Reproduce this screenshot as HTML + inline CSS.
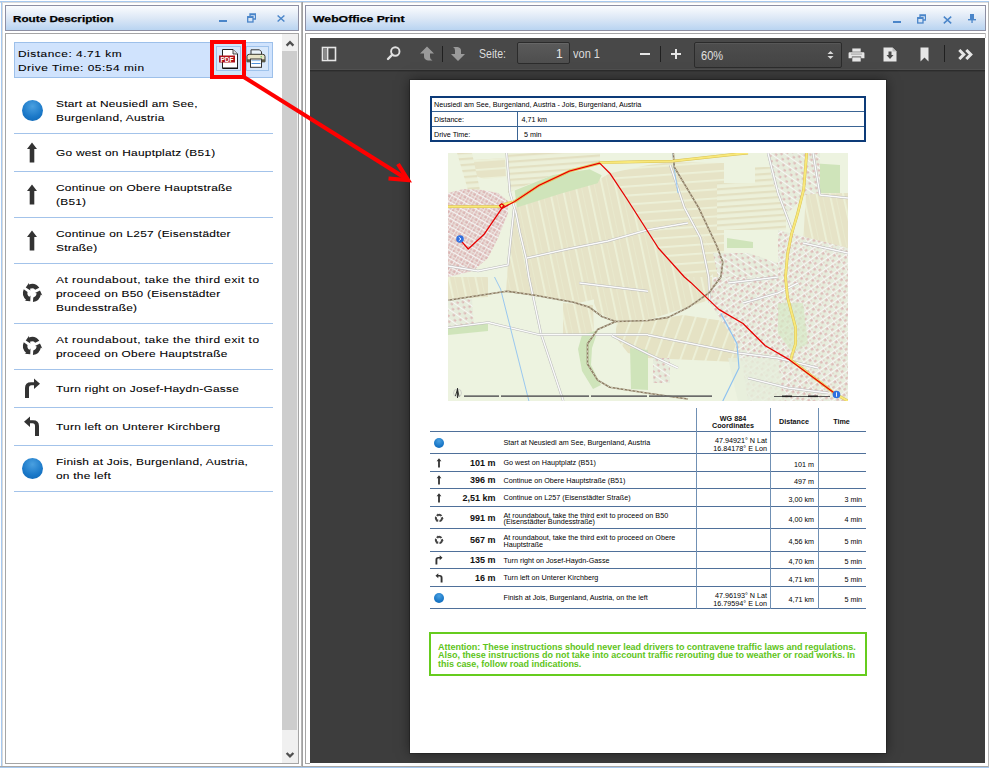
<!DOCTYPE html>
<html><head><meta charset="utf-8">
<style>
*{box-sizing:border-box;margin:0;padding:0}
html,body{width:989px;height:768px;overflow:hidden;background:#fff;font-family:"Liberation Sans",sans-serif}
.a{position:absolute}
.hdr{position:absolute;top:5px;height:26px;border:1px solid #8d8fa3;background:linear-gradient(#fbfcfe,#dde8f6 50%,#b9d4f1)}
.ttl{position:absolute;font-size:9px;line-height:12px;font-weight:bold;color:#000;white-space:nowrap;transform-origin:0 0;transform:scaleX(1.3);-webkit-text-stroke:0.25px #000}
.lst{position:absolute;left:14px;width:259px;border-bottom:1px solid #99bbe8}
.txt{position:absolute;left:56px;font-size:9.6px;line-height:14px;color:#000;letter-spacing:0.2px;white-space:nowrap;transform-origin:0 0;transform:scaleX(1.24);-webkit-text-stroke:0.08px #000}
.ic{position:absolute}
.p7{position:absolute;font-size:7.2px;line-height:8px;color:#000;white-space:nowrap}
.p7b{position:absolute;font-size:7.2px;line-height:8px;color:#111;white-space:nowrap;font-weight:bold}
.dist{position:absolute;font-size:9px;line-height:10px;font-weight:bold;color:#111;white-space:nowrap}
</style></head>
<body>
<!-- outer frame lines -->
<div class="a" style="left:0;top:1px;width:989px;height:1px;background:#a7c9ef"></div>
<div class="a" style="left:0;top:2px;width:989px;height:1px;background:#d9d9d9"></div>
<div class="a" style="left:1px;top:1px;width:1px;height:767px;background:#a7c9ef"></div>
<div class="a" style="left:2px;top:2px;width:1px;height:764px;background:#d9d9d9"></div>
<div class="a" style="left:0;top:766px;width:989px;height:1px;background:#a9a9a9"></div>
<div class="a" style="left:0;top:767px;width:989px;height:1px;background:#a7c9ef"></div>
<div class="a" style="left:988px;top:2px;width:1px;height:765px;background:#b5b5b5"></div>
<div class="a" style="left:301px;top:2px;width:1px;height:765px;background:#b5b5b5"></div>
<div class="a" style="left:302px;top:2px;width:1px;height:765px;background:#a0a0a0"></div>

<!-- LEFT PANEL -->
<div class="hdr" style="left:5px;width:294px"></div>
<div class="ttl" style="left:12.5px;top:13px">Route Description</div>
<div class="a" style="left:5px;top:33px;width:294px;height:731px;border:1px solid #a5a5a5;background:#fff"></div>


<!-- info box -->
<div class="a" style="left:14px;top:42px;width:259px;height:36px;background:#d0e3fd;border:1px solid #9dc0ea"></div>
<div class="txt" style="left:18px;top:47px;letter-spacing:0.42px">Distance: 4.71 km<br>Drive Time: 05:54 min</div>
<!-- pdf/print buttons -->
<div class="a" style="left:214px;top:44px;width:28px;height:31px;background:#cfe8fb"></div>
<div class="a" style="left:216px;top:46px;width:25px;height:25px;border:1px solid #9fc3ec;background:#d8e8fb"></div>
<div class="a" style="left:246px;top:46px;width:23px;height:25px;border:1px solid #9fc3ec;background:#d8e8fb"></div>
<svg class="a" style="left:217px;top:47px" width="23" height="23" viewBox="0 0 23 23">
 <path d="M5.5 2.5 H16 L20.5 7 V21.5 H5.5 Z" fill="#fff" stroke="#222" stroke-width="1"/>
 <path d="M16 2.5 V7 H20.5" fill="#ddd" stroke="#222" stroke-width="0.8"/>
 <rect x="6" y="20.5" width="15" height="1.5" fill="#111"/>
 <rect x="2" y="8.5" width="16" height="7" fill="#b01018"/>
 <text x="10" y="14.6" font-size="6.5" font-weight="bold" fill="#fff" text-anchor="middle" font-family="Liberation Sans">PDF</text>
</svg>
<svg class="a" style="left:246px;top:49px" width="23" height="19" viewBox="0 0 23 19">
 <path d="M5 0.8 H13.5 L15.5 2.8 V7 H5 Z" fill="#eaf3fb" stroke="#333" stroke-width="1"/>
 <path d="M1 7.5 Q1 5.3 3.3 5.3 H16.7 Q19 5.3 19 7.5 V12.8 H1 Z" fill="#e8e4c8" stroke="#3a3a30" stroke-width="1"/>
 <rect x="1" y="10.3" width="18" height="2.5" fill="#5a5844"/>
 <rect x="4.5" y="10" width="11" height="8.3" fill="#fff" stroke="#333" stroke-width="1"/>
 <rect x="5.5" y="11.2" width="9" height="0.9" fill="#8ab8e8"/>
 <rect x="5.5" y="14" width="9" height="1" fill="#4c8fd8"/>
 <circle cx="15.2" cy="7.8" r="0.7" fill="#5c5"/>
</svg>
<!-- red box -->
<div class="a" style="left:210px;top:40px;width:36px;height:39px;border:4px solid #fe0000"></div>
<div class="a" style="left:14px;top:133px;width:259px;height:1px;background:#a3c3ea"></div>
<div class="txt" style="top:97px">Start at Neusiedl am See,<br>Burgenland, Austria</div>
<div class="a" style="left:14px;top:171px;width:259px;height:1px;background:#a3c3ea"></div>
<div class="txt" style="top:146.4px">Go west on Hauptplatz (B51)</div>
<div class="a" style="left:14px;top:217px;width:259px;height:1px;background:#a3c3ea"></div>
<div class="txt" style="top:181px">Continue on Obere Hauptstra&szlig;e<br>(B51)</div>
<div class="a" style="left:14px;top:263px;width:259px;height:1px;background:#a3c3ea"></div>
<div class="txt" style="top:227px">Continue on L257 (Eisenst&auml;dter<br>Stra&szlig;e)</div>
<div class="a" style="left:14px;top:323px;width:259px;height:1px;background:#a3c3ea"></div>
<div class="txt" style="top:273px"><span style="letter-spacing:0.4px">At roundabout, take the third exit to</span><br>proceed on B50 (Eisenst&auml;dter<br>Bundesstra&szlig;e)</div>
<div class="a" style="left:14px;top:369px;width:259px;height:1px;background:#a3c3ea"></div>
<div class="txt" style="top:333px"><span style="letter-spacing:0.4px">At roundabout, take the third exit to</span><br>proceed on Obere Hauptstra&szlig;e</div>
<div class="a" style="left:14px;top:407px;width:259px;height:1px;background:#a3c3ea"></div>
<div class="txt" style="top:382.3px">Turn right on Josef-Haydn-Gasse</div>
<div class="a" style="left:14px;top:445px;width:259px;height:1px;background:#a3c3ea"></div>
<div class="txt" style="top:420.3px">Turn left on Unterer Kirchberg</div>
<div class="a" style="left:14px;top:491px;width:259px;height:1px;background:#a3c3ea"></div>
<div class="txt" style="top:455px">Finish at Jois, Burgenland, Austria,<br>on the left</div>
<div class="a" style="left:22px;top:100.0px;width:21px;height:21px;border-radius:50%;background:radial-gradient(circle at 50% 30%,#4aa0e0,#1a78c8 60%,#0e64b0)"></div>
<div class="a" style="left:22px;top:457.5px;width:21px;height:21px;border-radius:50%;background:radial-gradient(circle at 50% 30%,#4aa0e0,#1a78c8 60%,#0e64b0)"></div>
<svg class="a" style="left:26px;top:141.5px" width="12" height="21" viewBox="0 0 12 21"><path d="M6 0.5 L11 7 H8.3 V20.5 H3.7 V7 H1 Z" fill="#333"/></svg>
<svg class="a" style="left:26px;top:183.5px" width="12" height="21" viewBox="0 0 12 21"><path d="M6 0.5 L11 7 H8.3 V20.5 H3.7 V7 H1 Z" fill="#333"/></svg>
<svg class="a" style="left:26px;top:229.5px" width="12" height="21" viewBox="0 0 12 21"><path d="M6 0.5 L11 7 H8.3 V20.5 H3.7 V7 H1 Z" fill="#333"/></svg>
<svg class="a" style="left:20.7px;top:282px" width="22" height="22" viewBox="0 0 22 22"><path d="M18.28 5.71 A9.0 9.0 0 0 0 7.92 2.54 L8.08 0.81 L4.76 5.38 L9.50 8.40 L8.98 6.87 A4.6 4.6 0 0 1 14.20 7.69 Z M11.94 19.95 A9.0 9.0 0 0 0 19.86 12.56 L21.29 13.56 L18.99 8.40 L14.00 11.00 L15.59 11.32 A4.6 4.6 0 0 1 12.27 15.42 Z M2.78 7.34 A9.0 9.0 0 0 0 5.21 17.89 L3.64 18.63 L9.25 19.22 L9.50 13.60 L8.43 14.81 A4.6 4.6 0 0 1 6.54 9.89 Z" fill="#333"/></svg>
<svg class="a" style="left:20.7px;top:335px" width="22" height="22" viewBox="0 0 22 22"><path d="M18.28 5.71 A9.0 9.0 0 0 0 7.92 2.54 L8.08 0.81 L4.76 5.38 L9.50 8.40 L8.98 6.87 A4.6 4.6 0 0 1 14.20 7.69 Z M11.94 19.95 A9.0 9.0 0 0 0 19.86 12.56 L21.29 13.56 L18.99 8.40 L14.00 11.00 L15.59 11.32 A4.6 4.6 0 0 1 12.27 15.42 Z M2.78 7.34 A9.0 9.0 0 0 0 5.21 17.89 L3.64 18.63 L9.25 19.22 L9.50 13.60 L8.43 14.81 A4.6 4.6 0 0 1 6.54 9.89 Z" fill="#333"/></svg>
<svg class="a" style="left:24px;top:378px" width="17" height="21" viewBox="0 0 17 21"><path d="M1 20 V10 Q1 4.2 7 4.2 H10 V0.5 L16 5.7 L10 10.9 V7.2 H7.5 Q5 7.2 5 10 V20 Z" fill="#333"/></svg>
<svg class="a" style="left:23px;top:416px" width="17" height="21" viewBox="0 0 17 21"><g transform="translate(17 0) scale(-1 1)"><path d="M1 20 V10 Q1 4.2 7 4.2 H10 V0.5 L16 5.7 L10 10.9 V7.2 H7.5 Q5 7.2 5 10 V20 Z" fill="#333"/></g></svg>
<div class="a" style="left:282px;top:34px;width:16px;height:729px;background:#f0f0f0"></div>
<div class="a" style="left:282px;top:51px;width:15px;height:679px;background:#cdcdcd"></div>
<svg class="a" style="left:284px;top:38px" width="12" height="10" viewBox="0 0 12 10"><path d="M2.6 7.6 L6 4.2 L9.4 7.6" fill="none" stroke="#505050" stroke-width="2.3"/></svg>
<svg class="a" style="left:284px;top:750px" width="12" height="10" viewBox="0 0 12 10"><path d="M2.6 3 L6 6.4 L9.4 3" fill="none" stroke="#505050" stroke-width="2.3"/></svg>
<div class="a" style="left:219px;top:20px;width:8px;height:2px;background:#4a85c9"></div>
<svg class="a" style="left:247px;top:13px" width="9" height="10" viewBox="0 0 9 10"><path d="M3 3.5 V1 H8.5 V6 H6" fill="none" stroke="#4a85c9" stroke-width="1.3"/><rect x="0.7" y="3.7" width="5.3" height="5.3" fill="none" stroke="#4a85c9" stroke-width="1.3"/><rect x="3" y="1" width="5.5" height="1.3" fill="#4a85c9"/><rect x="0.7" y="3.7" width="5.3" height="1.3" fill="#4a85c9"/></svg>
<svg class="a" style="left:277px;top:15px" width="8" height="7" viewBox="0 0 8 7"><path d="M0.6 0.5 L7.4 6.5 M7.4 0.5 L0.6 6.5" stroke="#4a85c9" stroke-width="1.4"/></svg>

<!-- RIGHT PANEL -->
<div class="hdr" style="left:305px;width:681px"></div>
<div class="ttl" style="left:312.5px;top:13px;transform:scaleX(1.36)">WebOffice Print</div>
<div class="a" style="left:305px;top:33px;width:681px;height:731px;border-left:1px solid #a5a5a5;border-top:1px solid #a5a5a5;background:#fff"></div><div class="a" style="left:305px;top:763px;width:5px;height:1px;background:#a5a5a5"></div><div class="a" style="left:985px;top:33px;width:1px;height:5px;background:#c5c5c5"></div>
<div class="a" style="left:893px;top:21px;width:8px;height:2px;background:#4a85c9"></div>
<svg class="a" style="left:917px;top:14px" width="9" height="10" viewBox="0 0 9 10"><path d="M3 3.5 V1 H8.5 V6 H6" fill="none" stroke="#4a85c9" stroke-width="1.3"/><rect x="0.7" y="3.7" width="5.3" height="5.3" fill="none" stroke="#4a85c9" stroke-width="1.3"/><rect x="3" y="1" width="5.5" height="1.3" fill="#4a85c9"/><rect x="0.7" y="3.7" width="5.3" height="1.3" fill="#4a85c9"/></svg>
<svg class="a" style="left:943px;top:15.5px" width="9" height="8" viewBox="0 0 9 8"><path d="M0.8 0.6 L8.2 7.4 M8.2 0.6 L0.8 7.4" stroke="#4a85c9" stroke-width="1.5"/></svg>
<svg class="a" style="left:968px;top:14px" width="8" height="9" viewBox="0 0 8 9"><rect x="2" y="0" width="4" height="5.5" fill="#4a85c9"/><rect x="0" y="5" width="8" height="1.4" fill="#4a85c9"/><rect x="3.4" y="5" width="1.3" height="4" fill="#4a85c9"/></svg>

<!-- PDF viewer -->
<div class="a" style="left:310px;top:38px;width:675px;height:725px;background:#3d3d3d"></div>
<div class="a" style="left:310px;top:38px;width:675px;height:31px;background:#484848"></div><div class="a" style="left:310px;top:69px;width:675px;height:1px;background:#505050"></div><div class="a" style="left:310px;top:70px;width:675px;height:1px;background:#2c2c2c"></div><div class="a" style="left:310px;top:71px;width:675px;height:1px;background:#363636"></div>
<!-- page -->
<div class="a" style="left:410px;top:80px;width:476px;height:673px;background:#fff;box-shadow:0 0 0 1px rgba(0,0,0,.2),0 0 12px rgba(0,0,0,.5)"></div>

<!-- toolbar icons -->
<svg class="a" style="left:321px;top:46px" width="16" height="16" viewBox="0 0 16 16"><rect x="1.5" y="1.5" width="13" height="13" fill="none" stroke="#e6e6e6" stroke-width="1.6"/><rect x="2.3" y="2.3" width="3.8" height="11.4" fill="#8a8a8a"/><rect x="6" y="2" width="1.4" height="12" fill="#e6e6e6"/></svg>
<svg class="a" style="left:386px;top:45px" width="15" height="16" viewBox="0 0 15 16"><circle cx="9.3" cy="6.5" r="4.2" fill="none" stroke="#e0e0e0" stroke-width="1.9"/><path d="M6.3 9.6 L2 14" stroke="#e0e0e0" stroke-width="2.4" stroke-linecap="round"/></svg>
<svg class="a" style="left:419px;top:46px" width="16" height="16" viewBox="0 0 16 16"><path d="M8 0.6 L15 7.5 H11 V11 Q11 13.5 13.5 14.5 H9 Q5 13.5 5 10.5 V7.5 H1 Z" fill="#9a9a9a"/></svg>
<div class="a" style="left:442px;top:46px;width:1px;height:16px;background:#202020"></div>
<svg class="a" style="left:450px;top:46px" width="16" height="16" viewBox="0 0 16 16"><path d="M8 15 L15 8 H11 V4.5 Q11 1.5 7.5 1 H3 Q5 1.8 5 4.5 V8 H1 Z" fill="#9a9a9a"/></svg>
<div class="a" style="left:479px;top:46.6px;font-size:12px;line-height:14px;color:#dcdcdc;transform-origin:0 0;transform:scaleX(0.88)">Seite:</div>
<div class="a" style="left:517px;top:42px;width:53px;height:22px;border:1px solid #2b2b2b;border-radius:2px;background:linear-gradient(#5a5a5a,#4e4e4e);box-shadow:inset 0 1px 0 rgba(255,255,255,.08)"></div>
<div class="a" style="left:556px;top:46.6px;font-size:12px;line-height:14px;color:#e8e8e8">1</div>
<div class="a" style="left:573px;top:46.6px;font-size:12px;line-height:14px;color:#dcdcdc;transform-origin:0 0;transform:scaleX(0.92)">von 1</div>
<div class="a" style="left:640px;top:52.5px;width:10px;height:2.5px;background:#e6e6e6"></div>
<div class="a" style="left:660px;top:46px;width:1px;height:16px;background:#202020"></div>
<div class="a" style="left:671px;top:52.8px;width:10px;height:2.5px;background:#e6e6e6"></div>
<div class="a" style="left:674.8px;top:49px;width:2.5px;height:10px;background:#e6e6e6"></div>
<div class="a" style="left:694px;top:42px;width:148px;height:26px;border:1px solid #2b2b2b;border-radius:2px;background:linear-gradient(#4d4d4d,#444);box-shadow:inset 0 1px 0 rgba(255,255,255,.06)"></div>
<div class="a" style="left:701px;top:48.8px;font-size:12px;line-height:14px;color:#e0e0e0;transform-origin:0 0;transform:scaleX(0.92)">60%</div>
<svg class="a" style="left:826px;top:50px" width="9" height="10" viewBox="0 0 9 10"><path d="M1.5 4 L4.5 1 L7.5 4 Z M1.5 6 L4.5 9 L7.5 6 Z" fill="#d8d8d8"/></svg>
<svg class="a" style="left:848px;top:48px" width="17" height="14" viewBox="0 0 18 15"><path d="M4.5 0.5 H13.5 V4 H4.5 Z" fill="#e6e6e6"/><path d="M1.5 4.5 H16.5 Q17.5 4.5 17.5 6 V11 H14 V9 H4 V11 H0.5 V6 Q0.5 4.5 1.5 4.5 Z" fill="#e6e6e6"/><rect x="4.5" y="10" width="9" height="4.5" fill="#e6e6e6"/><rect x="3" y="6" width="12" height="1" fill="#9a9a9a"/></svg>
<svg class="a" style="left:883px;top:47px" width="14" height="15" viewBox="0 0 14 15"><path d="M0.5 0.5 H9.5 L13.5 4.5 V14.5 H0.5 Z" fill="#e6e6e6"/><path d="M9.5 0.5 V4.5 H13.5" fill="#bbb"/><path d="M5.5 4.5 H8.5 V8 H10.5 L7 12 L3.5 8 H5.5 Z" fill="#4a4a4a"/></svg>
<svg class="a" style="left:920px;top:47px" width="9" height="15" viewBox="0 0 9 15"><path d="M0.5 0.5 H8.5 V14.5 L4.5 10.5 L0.5 14.5 Z" fill="#e6e6e6"/></svg>
<div class="a" style="left:944px;top:45px;width:1px;height:17px;background:#202020"></div>
<svg class="a" style="left:957.5px;top:49px" width="16" height="11" viewBox="0 0 16 11"><path d="M1.3 1 L5.8 5.5 L1.3 10 M8.3 1 L12.8 5.5 L8.3 10" fill="none" stroke="#e6e6e6" stroke-width="3"/></svg>

<!-- PAGE CONTENT -->
<!-- MAP -->
<svg class="a" style="left:448px;top:153px" width="400" height="248" viewBox="0 0 400 248">
<defs>
<pattern id="fld" width="13" height="13" patternUnits="userSpaceOnUse" patternTransform="rotate(-12)"><rect width="13" height="13" fill="#e6e3c7"/><rect width="1.8" height="13" fill="#edf1d8"/><rect x="6" width="0.8" height="13" fill="#e9ebcf"/></pattern>
<pattern id="fldh" width="12" height="9" patternUnits="userSpaceOnUse" patternTransform="rotate(-4)"><rect width="12" height="9" fill="#e6e3c6"/><rect width="12" height="1.8" fill="#edf1d9"/></pattern>
<pattern id="fldd" width="12" height="12" patternUnits="userSpaceOnUse" patternTransform="rotate(20)"><rect width="12" height="12" fill="#e5e2c4"/><rect width="1.8" height="12" fill="#edf1d9"/></pattern>
<pattern id="town" width="7" height="7" patternUnits="userSpaceOnUse" patternTransform="rotate(30)"><rect width="7" height="7" fill="#ece8e2"/><rect x="0.3" y="0.3" width="2.8" height="2.6" fill="#dbb3b2"/><rect x="3.8" y="0.5" width="2.5" height="2.3" fill="#dfbdbb"/><rect x="0.5" y="3.8" width="2.4" height="2" fill="#e0c0be"/><rect x="3.6" y="3.6" width="2.8" height="2.4" fill="#dcb5b4"/><rect x="0" y="6.2" width="7" height="0.8" fill="#f8f8f8"/><rect x="3.2" y="0" width="0.5" height="7" fill="#f4f4f4"/></pattern>
<pattern id="town2" width="8" height="8" patternUnits="userSpaceOnUse" patternTransform="rotate(35)"><rect width="8" height="8" fill="#e6ecdc"/><rect x="0.5" y="0.5" width="2.5" height="2" fill="#dcb8b6"/><rect x="4.5" y="4" width="2.5" height="2.2" fill="#dfbebb"/><rect x="0" y="7.2" width="8" height="0.8" fill="#fafafa"/></pattern>
<pattern id="town3" width="8" height="8" patternUnits="userSpaceOnUse" patternTransform="rotate(-35)"><rect width="8" height="8" fill="#e6ecdc"/><rect x="0.4" y="0.4" width="2.6" height="2.2" fill="#dcb6b4"/><rect x="4.2" y="4" width="2.6" height="2.2" fill="#e0bfbc"/><rect x="4.2" y="0.6" width="1.5" height="1.5" fill="#e3c8c5"/><rect x="0" y="7.2" width="8" height="0.8" fill="#fafafa"/><rect x="3.4" y="0" width="0.6" height="8" fill="#f6f6f6"/></pattern>
<pattern id="fldl" width="12" height="6" patternUnits="userSpaceOnUse" patternTransform="rotate(-4)"><rect width="12" height="6" fill="#ecf0d9"/><rect width="12" height="2.2" fill="#e3e0c2"/></pattern>
</defs>
<rect width="400" height="248" fill="#edf3e0"/>
<polygon points="25.0,7.0 57.0,5.0 58.0,24.0 36.0,26.0 25.0,22.0" fill="url(#fldh)"/>
<polygon points="9.0,0.0 24.0,0.0 32.0,37.0 20.0,37.0" fill="url(#fldl)"/>
<polygon points="60.0,0.0 152.0,0.0 152.0,9.0 110.0,20.0 66.0,37.0 60.0,40.0" fill="url(#fldl)"/>
<polygon points="67.0,55.0 110.0,38.0 152.0,26.0 161.8,20.2 178.0,44.5 210.3,95.0 236.4,124.0 205.0,132.0 170.0,141.0 130.0,150.0 87.0,142.0 58.0,139.0 60.0,110.0 64.0,70.0" fill="url(#fld)"/>
<polygon points="161.8,20.2 200.0,12.0 224.0,9.0 240.0,60.0 262.0,95.0 270.0,115.0 262.0,124.0 236.4,124.0 210.3,95.0 178.0,44.5" fill="url(#fldh)"/>
<polygon points="224.0,9.0 276.0,10.0 276.0,124.0 265.0,124.0 262.0,95.0 240.0,60.0" fill="url(#fldh)"/>
<polygon points="269.0,30.0 307.0,30.0 307.0,77.0 269.0,77.0" fill="url(#fldl)"/>
<polygon points="307.0,14.0 338.0,14.0 338.0,77.0 307.0,77.0" fill="url(#fldl)"/>
<polygon points="358.0,41.0 400.0,40.0 400.0,97.0 355.0,90.0" fill="url(#fld)"/>
<polygon points="0.0,124.0 40.0,124.0 40.0,144.0 0.0,146.0" fill="url(#fld)"/>
<polygon points="115.0,150.0 145.0,152.0 146.0,181.0 115.0,181.0" fill="url(#fld)"/>
<polygon points="146.0,124.0 200.0,124.0 264.0,124.0 264.0,146.0 240.0,154.0 200.0,167.0 168.0,168.0 150.0,160.0 146.0,150.0" fill="url(#fld)"/>
<polygon points="168.0,169.0 200.0,168.0 235.0,162.0 289.0,170.0 289.0,209.0 200.0,205.0 180.0,200.0 168.0,185.0" fill="url(#fldd)"/>
<polygon points="66.7,37.4 105.0,22.0 141.6,16.2 153.7,22.2 149.6,30.3 113.2,40.4 68.8,54.6" fill="#cfe4ba"/>
<polygon points="361.8,10.0 392.0,12.0 392.0,40.0 362.0,40.0" fill="#cfe4ba"/>
<polygon points="279.0,85.0 305.0,89.0 305.0,95.0 279.0,95.0" fill="#cfe4ba"/>
<polygon points="134.0,182.0 150.0,177.0 144.0,195.0 143.0,212.0 153.0,232.0 145.0,236.0 134.0,218.0 130.0,196.0" fill="#cfe4ba"/>
<polygon points="182.0,195.0 200.0,197.0 200.0,237.0 183.0,236.0" fill="#cfe4ba"/>
<polygon points="0.0,175.0 40.0,170.0 40.0,178.0 0.0,182.0" fill="#cfe4ba"/>
<polygon points="0.0,40.0 15.0,36.0 35.0,37.0 50.0,40.0 60.0,48.0 60.0,60.0 50.0,85.0 40.0,105.0 25.0,118.0 0.0,124.0" fill="url(#town)"/>
<polygon points="0.0,146.0 24.0,146.0 26.0,172.0 0.0,173.0" fill="url(#town2)"/>
<polygon points="319.0,0.0 372.0,0.0 372.0,40.0 357.0,42.0 340.0,60.0 325.0,30.0" fill="url(#town2)"/>
<polygon points="265.0,124.0 330.0,124.0 330.0,77.0 400.0,95.0 400.0,248.0 300.0,248.0 295.0,215.0 285.0,185.0 262.0,150.0" fill="url(#town3)"/>
<polygon points="265.0,100.0 300.0,100.0 330.0,110.0 330.0,124.0 270.0,124.0" fill="url(#town2)"/>
<polygon points="205.0,205.0 222.0,205.0 222.0,230.0 205.0,230.0" fill="url(#town2)"/>
<polygon points="330,150 355,150 360,190 345,200 330,180" fill="#d6e8c4" opacity="0.7"/>
<polygon points="280,205 330,205 335,248 290,248" fill="#e6eedb" opacity="0.8"/>
<path d="M58.6 0.0 L62.0 40.0 L68.0 60.0 L72.0 80.0 L78.0 105.0 L80.9 124.0 L93.0 180.6 L115.3 248.0" fill="none" stroke="#b9b9b9" stroke-width="2.4"/><path d="M58.6 0.0 L62.0 40.0 L68.0 60.0 L72.0 80.0 L78.0 105.0 L80.9 124.0 L93.0 180.6 L115.3 248.0" fill="none" stroke="#fbfbfb" stroke-width="1.4"/>
<path d="M78.9 105.0 L120.0 96.0 L160.0 88.0 L200.0 76.8 L240.0 70.0" fill="none" stroke="#b9b9b9" stroke-width="2.4"/><path d="M78.9 105.0 L120.0 96.0 L160.0 88.0 L200.0 76.8 L240.0 70.0" fill="none" stroke="#fbfbfb" stroke-width="1.4"/>
<path d="M0.0 174.6 L40.4 169.5 L91.0 181.6 L200.0 181.6" fill="none" stroke="#b9b9b9" stroke-width="2.4"/><path d="M0.0 174.6 L40.4 169.5 L91.0 181.6 L200.0 181.6" fill="none" stroke="#fbfbfb" stroke-width="1.4"/>
<path d="M131.4 130.0 L200.0 138.2" fill="none" stroke="#b9b9b9" stroke-width="2.4"/><path d="M131.4 130.0 L200.0 138.2" fill="none" stroke="#fbfbfb" stroke-width="1.4"/>
<path d="M163.8 182.6 L200.0 200.8 L230.0 215.0" fill="none" stroke="#b9b9b9" stroke-width="2.4"/><path d="M163.8 182.6 L200.0 200.8 L230.0 215.0" fill="none" stroke="#fbfbfb" stroke-width="1.4"/>
<path d="M222.2 12.1 L236.4 54.6 L252.6 84.9 L260.7 124.0 L262.0 150.0" fill="none" stroke="#b9b9b9" stroke-width="2.4"/><path d="M222.2 12.1 L236.4 54.6 L252.6 84.9 L260.7 124.0 L262.0 150.0" fill="none" stroke="#fbfbfb" stroke-width="1.4"/>
<path d="M0.0 113.0 L30.0 118.0 L60.0 112.0 L66.0 56.0" fill="none" stroke="#b9b9b9" stroke-width="2.4"/><path d="M0.0 113.0 L30.0 118.0 L60.0 112.0 L66.0 56.0" fill="none" stroke="#fbfbfb" stroke-width="1.4"/>
<path d="M200.0 182.0 L240.0 190.0 L290.0 200.0 L330.0 205.0 L370.0 215.0" fill="none" stroke="#b9b9b9" stroke-width="2.4"/><path d="M200.0 182.0 L240.0 190.0 L290.0 200.0 L330.0 205.0 L370.0 215.0" fill="none" stroke="#fbfbfb" stroke-width="1.4"/>
<path d="M365.0 0.0 L372.0 42.0 L400.0 45.0" fill="none" stroke="#b9b9b9" stroke-width="2.4"/><path d="M365.0 0.0 L372.0 42.0 L400.0 45.0" fill="none" stroke="#fbfbfb" stroke-width="1.4"/>
<path d="M320.0 0.0 L330.0 40.0 L345.0 80.0" fill="none" stroke="#b9b9b9" stroke-width="2.4"/><path d="M320.0 0.0 L330.0 40.0 L345.0 80.0" fill="none" stroke="#fbfbfb" stroke-width="1.4"/>
<path d="M355.0 90.0 L400.0 100.0" fill="none" stroke="#b9b9b9" stroke-width="2.4"/><path d="M355.0 90.0 L400.0 100.0" fill="none" stroke="#fbfbfb" stroke-width="1.4"/>
<path d="M280.0 130.0 L330.0 124.0" fill="none" stroke="#b9b9b9" stroke-width="2.4"/><path d="M280.0 130.0 L330.0 124.0" fill="none" stroke="#fbfbfb" stroke-width="1.4"/>
<path d="M295.0 150.0 L330.0 140.0 L350.0 130.0" fill="none" stroke="#b9b9b9" stroke-width="2.4"/><path d="M295.0 150.0 L330.0 140.0 L350.0 130.0" fill="none" stroke="#fbfbfb" stroke-width="1.4"/>
<path d="M300.0 225.0 L340.0 235.0 L380.0 240.0" fill="none" stroke="#b9b9b9" stroke-width="2.4"/><path d="M300.0 225.0 L340.0 235.0 L380.0 240.0" fill="none" stroke="#fbfbfb" stroke-width="1.4"/>
<path d="M46.5 124.0 L52.6 136.1 L80.9 248.0" fill="none" stroke="#8ec2f0" stroke-width="0.9"/>
<path d="M272.8 160.4 L289.0 190.7 L291.0 215.0 L274.8 248.0" fill="none" stroke="#8ec2f0" stroke-width="1.2"/>
<path d="M225.0 0.0 L226.0 14.0 L230.0 40.0" fill="none" stroke="#8ec2f0" stroke-width="0.9"/>
<path d="M0.0 147.3 L58.6 138.2 L87.0 142.2 L125.4 149.3 L141.6 154.3 L153.7 163.4 L167.8 168.5 L200.0 167.5 L220.2 164.4 L240.4 154.3 L260.7 140.2 L272.8 124.0 L274.8 109.2 L268.8 93.0 L250.6 54.6 L226.3 14.2 L225.3 0.0" fill="none" stroke="#8a7a60" stroke-width="1.6" stroke-linejoin="round"/><path d="M0.0 147.3 L58.6 138.2 L87.0 142.2 L125.4 149.3 L141.6 154.3 L153.7 163.4 L167.8 168.5 L200.0 167.5 L220.2 164.4 L240.4 154.3 L260.7 140.2 L272.8 124.0 L274.8 109.2 L268.8 93.0 L250.6 54.6 L226.3 14.2 L225.3 0.0" fill="none" stroke="#f0ece0" stroke-width="0.7" stroke-dasharray="2 2"/>
<path d="M167.8 168.5 L149.6 176.6 L139.5 190.7 L139.5 211.0 L149.6 227.1 L161.8 234.2 L200.0 240.3 L240.0 246.0" fill="none" stroke="#8a7a60" stroke-width="1.6" stroke-linejoin="round"/><path d="M167.8 168.5 L149.6 176.6 L139.5 190.7 L139.5 211.0 L149.6 227.1 L161.8 234.2 L200.0 240.3 L240.0 246.0" fill="none" stroke="#f0ece0" stroke-width="0.7" stroke-dasharray="2 2"/>
<path d="M0.0 53.6 L52.6 53.6 L53.6 52.2 L66.7 48.5 L91.0 32.4 L121.3 18.2 L151.7 10.1 L151.7 9.7 L200.0 8.5 L224.3 8.1 L289.0 1.0 L300.0 0.0" fill="none" stroke="#d8c050" stroke-width="2.8" stroke-linejoin="round"/><path d="M0.0 53.6 L52.6 53.6 L53.6 52.2 L66.7 48.5 L91.0 32.4 L121.3 18.2 L151.7 10.1 L151.7 9.7 L200.0 8.5 L224.3 8.1 L289.0 1.0 L300.0 0.0" fill="none" stroke="#f8e87a" stroke-width="1.9" stroke-linejoin="round"/>
<path d="M358.7 0.0 L355.7 36.4 L349.6 60.7 L343.6 80.9 L339.5 101.1 L337.5 124.0 L339.5 144.2 L347.6 174.6 L347.6 190.7 L342.6 206.9 L388.0 241.3 L400.0 248.0" fill="none" stroke="#d8c050" stroke-width="2.8" stroke-linejoin="round"/><path d="M358.7 0.0 L355.7 36.4 L349.6 60.7 L343.6 80.9 L339.5 101.1 L337.5 124.0 L339.5 144.2 L347.6 174.6 L347.6 190.7 L342.6 206.9 L388.0 241.3 L400.0 248.0" fill="none" stroke="#f8e87a" stroke-width="1.9" stroke-linejoin="round"/>
<path d="M12.1 86.6 L20.2 96.0 L36.4 80.9 L53.6 55.6 L51.5 52.5 L53.6 50.8 L56.0 52.5 L53.6 55.6 L66.7 48.5 L91.0 32.4 L121.3 18.2 L151.7 10.1 L161.8 20.2 L178.0 44.5 L210.3 95.0 L236.4 124.0 L242.7 129.4 L270.8 156.4 L295.0 170.5 L317.3 192.8 L341.6 206.9 L388.0 241.3" fill="none" stroke="#e60000" stroke-width="1.3" stroke-linejoin="round"/>
<circle cx="12" cy="86" r="3.8" fill="#2f6fe0"/><path d="M10.8 84.2 L13 86 L10.8 87.8" fill="none" stroke="#fff" stroke-width="0.9"/>
<circle cx="388.5" cy="241.5" r="3.8" fill="#2f6fe0"/><rect x="388" y="239.3" width="0.9" height="4.4" fill="#fff"/>
<rect x="326" y="243" width="56" height="1" fill="#555"/><rect x="334" y="242.5" width="10" height="1.6" fill="#222"/><rect x="360" y="242.5" width="10" height="1.6" fill="#222"/>
<g fill="#6a6a6a"><rect x="16" y="242.3" width="35" height="1.7"/><rect x="53" y="242.3" width="88" height="1.7"/><rect x="143" y="242.3" width="56" height="1.7"/><rect x="201" y="242.3" width="63" height="1.7"/></g>
<circle cx="9.5" cy="240" r="4" fill="none" stroke="#bbb" stroke-width="0.6"/><path d="M9.5 235 L9.5 245 M7.5 243 L9.5 236 L11 243.5" fill="none" stroke="#222" stroke-width="0.9"/>
</svg>
<!-- /MAP -->

<div class="a" style="left:430px;top:96px;width:436px;height:46px;border:2px solid #0d3b78"></div>
<div class="a" style="left:432px;top:110.5px;width:432px;height:1px;background:#3a6494"></div>
<div class="a" style="left:432px;top:126px;width:432px;height:1px;background:#3a6494"></div>
<div class="a" style="left:517px;top:111px;width:1px;height:29px;background:#3a6494"></div>
<div class="p7" style="left:434px;top:100.7px">Neusiedl am See, Burgenland, Austria - Jois, Burgenland, Austria</div>
<div class="p7" style="left:434px;top:115.7px">Distance:</div>
<div class="p7" style="left:521.5px;top:115.7px">4,71 km</div>
<div class="p7" style="left:434px;top:131.4px">Drive Time:</div>
<div class="p7" style="left:524px;top:131.4px">5 min</div>
<div class="a" style="left:430px;top:431px;width:436px;height:1px;background:#4f709a"></div>
<div class="a" style="left:430px;top:453px;width:436px;height:1px;background:#4f709a"></div>
<div class="a" style="left:430px;top:471px;width:436px;height:1px;background:#4f709a"></div>
<div class="a" style="left:430px;top:488px;width:436px;height:1px;background:#4f709a"></div>
<div class="a" style="left:430px;top:506px;width:436px;height:1px;background:#4f709a"></div>
<div class="a" style="left:430px;top:528px;width:436px;height:1px;background:#4f709a"></div>
<div class="a" style="left:430px;top:551px;width:436px;height:1px;background:#4f709a"></div>
<div class="a" style="left:430px;top:568px;width:436px;height:1px;background:#4f709a"></div>
<div class="a" style="left:430px;top:586px;width:436px;height:1px;background:#4f709a"></div>
<div class="a" style="left:430px;top:608px;width:436px;height:1px;background:#4f709a"></div>
<div class="a" style="left:695.5px;top:408px;width:1.2px;height:201px;background:#7090b4"></div>
<div class="a" style="left:770px;top:408px;width:1.2px;height:201px;background:#7090b4"></div>
<div class="a" style="left:818px;top:408px;width:1.2px;height:201px;background:#7090b4"></div>
<div class="p7b" style="left:696px;top:414.5px;width:74px;text-align:center;line-height:7.2px">WG 884<br>Coordinates</div>
<div class="p7b" style="left:770px;top:418px;width:48px;text-align:center">Distance</div>
<div class="p7b" style="left:818px;top:418px;width:47px;text-align:center">Time</div>
<div class="a" style="left:434px;top:437.5px;width:10px;height:10px;border-radius:50%;background:radial-gradient(circle at 50% 30%,#4aa0e0,#1a78c8 60%,#0e64b0)"></div>
<div class="p7" style="left:503.5px;top:440.2px;line-height:6.6px">Start at Neusiedl am See, Burgenland, Austria</div>
<div class="p7" style="right:222px;top:437.3px;line-height:7.8px;text-align:right">47.94921° N Lat<br>16.84178° E Lon</div>
<svg class="a" style="left:436px;top:457.5px" width="6" height="10" viewBox="0 0 6 10"><path d="M3 0.3 L5.4 3.3 H3.9 V9.5 H2.1 V3.3 H0.6 Z" fill="#333"/></svg>
<div class="dist" style="right:493.5px;top:457.8px">101 m</div>
<div class="p7" style="left:503.5px;top:460.2px;line-height:6.6px">Go west on Hauptplatz (B51)</div>
<div class="p7" style="right:175px;top:460.8px">101 m</div>
<svg class="a" style="left:436px;top:475.0px" width="6" height="10" viewBox="0 0 6 10"><path d="M3 0.3 L5.4 3.3 H3.9 V9.5 H2.1 V3.3 H0.6 Z" fill="#333"/></svg>
<div class="dist" style="right:493.5px;top:475.3px">396 m</div>
<div class="p7" style="left:503.5px;top:477.7px;line-height:6.6px">Continue on Obere Hauptstraße (B51)</div>
<div class="p7" style="right:175px;top:478.3px">497 m</div>
<svg class="a" style="left:436px;top:492.5px" width="6" height="10" viewBox="0 0 6 10"><path d="M3 0.3 L5.4 3.3 H3.9 V9.5 H2.1 V3.3 H0.6 Z" fill="#333"/></svg>
<div class="dist" style="right:493.5px;top:492.8px">2,51 km</div>
<div class="p7" style="left:503.5px;top:495.2px;line-height:6.6px">Continue on L257 (Eisenstädter Straße)</div>
<div class="p7" style="right:175px;top:495.8px">3,00 km</div>
<div class="p7" style="right:127px;top:495.8px">3 min</div>
<svg class="a" style="left:433.5px;top:512.5px" width="10" height="10" viewBox="0 0 22 22"><path d="M18.28 5.71 A9.0 9.0 0 0 0 7.92 2.54 L8.08 0.81 L4.76 5.38 L9.50 8.40 L8.98 6.87 A4.6 4.6 0 0 1 14.20 7.69 Z M11.94 19.95 A9.0 9.0 0 0 0 19.86 12.56 L21.29 13.56 L18.99 8.40 L14.00 11.00 L15.59 11.32 A4.6 4.6 0 0 1 12.27 15.42 Z M2.78 7.34 A9.0 9.0 0 0 0 5.21 17.89 L3.64 18.63 L9.25 19.22 L9.50 13.60 L8.43 14.81 A4.6 4.6 0 0 1 6.54 9.89 Z" fill="#444"/></svg>
<div class="dist" style="right:493.5px;top:512.8px">991 m</div>
<div class="p7" style="left:503.5px;top:512.7px;line-height:6.6px">At roundabout, take the third exit to proceed on B50<br>(Eisenstädter Bundesstraße)</div>
<div class="p7" style="right:175px;top:515.8px">4,00 km</div>
<div class="p7" style="right:127px;top:515.8px">4 min</div>
<svg class="a" style="left:433.5px;top:535.0px" width="10" height="10" viewBox="0 0 22 22"><path d="M18.28 5.71 A9.0 9.0 0 0 0 7.92 2.54 L8.08 0.81 L4.76 5.38 L9.50 8.40 L8.98 6.87 A4.6 4.6 0 0 1 14.20 7.69 Z M11.94 19.95 A9.0 9.0 0 0 0 19.86 12.56 L21.29 13.56 L18.99 8.40 L14.00 11.00 L15.59 11.32 A4.6 4.6 0 0 1 12.27 15.42 Z M2.78 7.34 A9.0 9.0 0 0 0 5.21 17.89 L3.64 18.63 L9.25 19.22 L9.50 13.60 L8.43 14.81 A4.6 4.6 0 0 1 6.54 9.89 Z" fill="#444"/></svg>
<div class="dist" style="right:493.5px;top:535.3px">567 m</div>
<div class="p7" style="left:503.5px;top:535.2px;line-height:6.6px">At roundabout, take the third exit to proceed on Obere<br>Hauptstraße</div>
<div class="p7" style="right:175px;top:538.3px">4,56 km</div>
<div class="p7" style="right:127px;top:538.3px">5 min</div>
<svg class="a" style="left:435px;top:555.0px" width="8" height="10" viewBox="0 0 17 21"><path d="M1 20 V10 Q1 4.2 7 4.2 H10 V0.5 L16 5.7 L10 10.9 V7.2 H7.5 Q5 7.2 5 10 V20 Z" fill="#333"/></svg>
<div class="dist" style="right:493.5px;top:555.3px">135 m</div>
<div class="p7" style="left:503.5px;top:557.7px;line-height:6.6px">Turn right on Josef-Haydn-Gasse</div>
<div class="p7" style="right:175px;top:558.3px">4,70 km</div>
<div class="p7" style="right:127px;top:558.3px">5 min</div>
<svg class="a" style="left:435px;top:572.5px" width="8" height="10" viewBox="0 0 17 21"><g transform="translate(17 0) scale(-1 1)"><path d="M1 20 V10 Q1 4.2 7 4.2 H10 V0.5 L16 5.7 L10 10.9 V7.2 H7.5 Q5 7.2 5 10 V20 Z" fill="#333"/></g></svg>
<div class="dist" style="right:493.5px;top:572.8px">16 m</div>
<div class="p7" style="left:503.5px;top:575.2px;line-height:6.6px">Turn left on Unterer Kirchberg</div>
<div class="p7" style="right:175px;top:575.8px">4,71 km</div>
<div class="p7" style="right:127px;top:575.8px">5 min</div>
<div class="a" style="left:434px;top:592.5px;width:10px;height:10px;border-radius:50%;background:radial-gradient(circle at 50% 30%,#4aa0e0,#1a78c8 60%,#0e64b0)"></div>
<div class="p7" style="left:503.5px;top:595.2px;line-height:6.6px">Finish at Jois, Burgenland, Austria, on the left</div>
<div class="p7" style="right:222px;top:592.3px;line-height:7.8px;text-align:right">47.96193° N Lat<br>16.79594° E Lon</div>
<div class="p7" style="right:175px;top:595.8px">4,71 km</div>
<div class="p7" style="right:127px;top:595.8px">5 min</div>

<div class="a" style="left:429px;top:632px;width:438px;height:44px;border:2px solid #66cc1e"></div>
<div class="a" style="left:438px;top:642.8px;font-size:9px;line-height:8.4px;font-weight:bold;color:#5ec41a;white-space:nowrap;letter-spacing:-0.02px">Attention: These instructions should never lead drivers to contravene traffic laws and regulations.<br>Also, these instructions do not take into account traffic rerouting due to weather or road works. In<br>this case, follow road indications.</div>

<!-- ANNOTATION ARROW -->
<svg class="a" style="left:0;top:0" width="989" height="768" viewBox="0 0 989 768">
<path d="M243 76.5 L406 178.5" stroke="#fe0000" stroke-width="4.2" fill="none"/>
<path d="M398 164 L408 180 L388.5 178.5" stroke="#fe0000" stroke-width="4.2" fill="none" stroke-linejoin="miter" stroke-miterlimit="10"/>
</svg>
</body></html>
